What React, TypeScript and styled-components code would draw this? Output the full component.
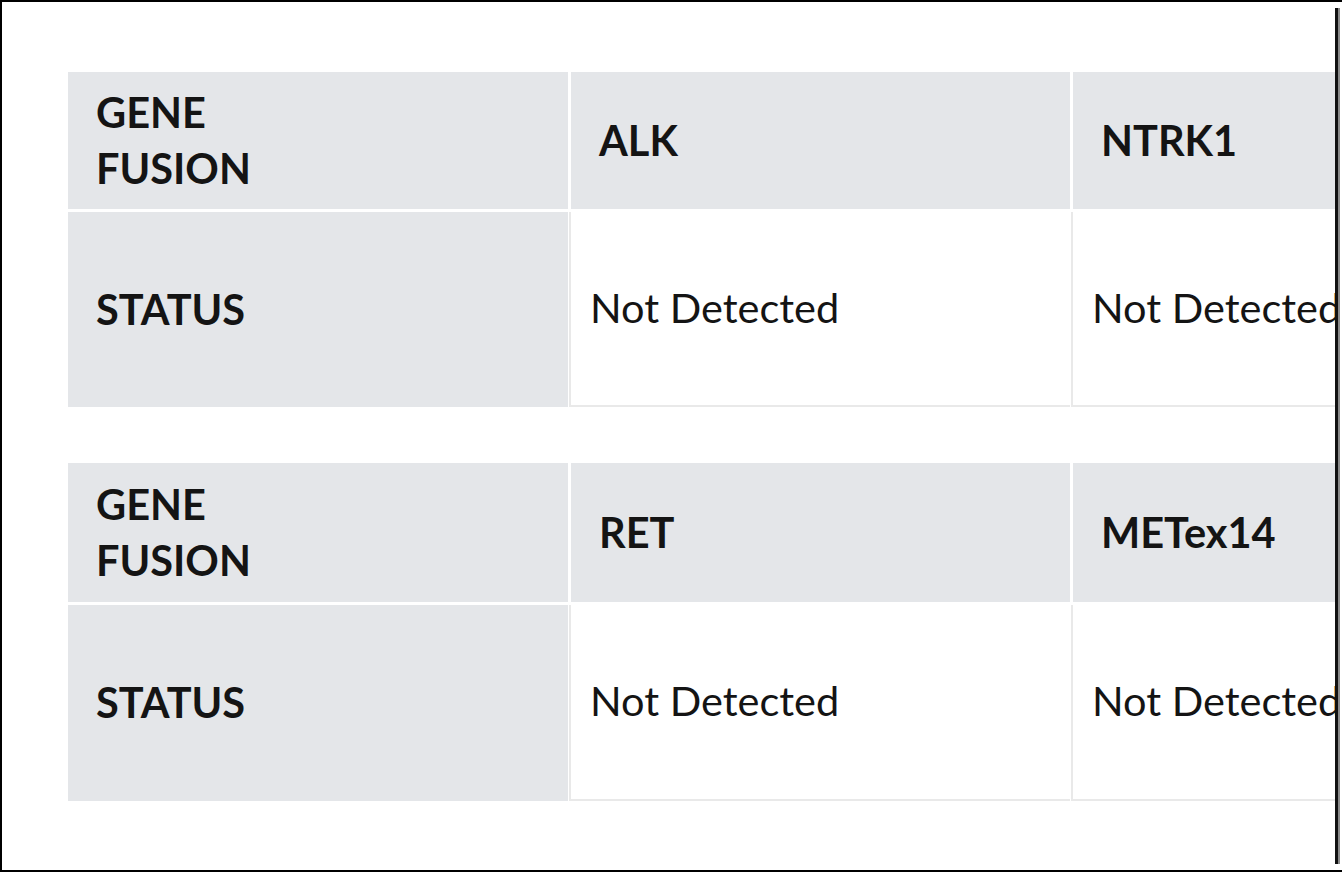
import React from "react";
import styled, { createGlobalStyle } from "styled-components";

const GlobalStyle = createGlobalStyle`
  html, body {
    margin: 0;
    padding: 0;
    background: #ffffff;
  }
  body {
    font-family: Lato, "Open Sans", "Liberation Sans", sans-serif;
    color: #151515;
  }
  * { box-sizing: border-box; }
`;

const Frame = styled.div`
  width: 1342px;
  height: 872px;
  border-top: 2px solid #000;
  border-left: 2px solid #000;
  border-bottom: 2px solid #000;
  display: flex;
  background: #fff;
  overflow: hidden;
`;

const Content = styled.div`
  flex: 1;
  min-width: 0;
  overflow: hidden;
  padding: 70px 0 0 66px;
  display: flex;
  flex-direction: column;
  gap: 56px;
`;

const Rail = styled.div`
  width: 7px;
  margin: 6px 0 6px;
  border-left: 3px solid #111;
  border-right: 2px solid #fff;
  background: #8a8a8a;
  flex-shrink: 0;
`;

const Grid = styled.div<{ $head: number; $body: number }>`
  display: grid;
  grid-template-columns: 500px 499px 500px;
  grid-template-rows: ${(p) => p.$head}px ${(p) => p.$body}px;
  column-gap: 3px;
  row-gap: 3px;
  width: max-content;
`;

const HeadCell = styled.div`
  background: #e4e6e9;
  display: flex;
  align-items: center;
  padding: 0 20px 2px 28px;
  font-weight: 700;
  font-size: 41.5px;
  line-height: 56px;
  color: #141414;
`;

const ValueCell = styled.div`
  background: #fff;
  display: flex;
  align-items: center;
  padding: 0 10px 4px 19px;
  margin-left: -2px;
  border-left: 2px solid #e9e9e9;
  border-bottom: 2px solid #e9e9e9;
  font-weight: 400;
  font-size: 41.5px;
  line-height: 56px;
  color: #141414;
  white-space: nowrap;
`;

type Block = {
  genes: [string, string];
  statuses: [string, string];
  head: number;
  body: number;
};

const blocks: Block[] = [
  { genes: ["ALK", "NTRK1"], statuses: ["Not Detected", "Not Detected"], head: 137, body: 195 },
  { genes: ["RET", "METex14"], statuses: ["Not Detected", "Not Detected"], head: 139, body: 196 },
];

const FusionTable: React.FC<{ block: Block }> = ({ block }) => (
  <Grid $head={block.head} $body={block.body}>
    <HeadCell>
      GENE
      <br />
      FUSION
    </HeadCell>
    {block.genes.map((g) => (
      <HeadCell key={g}>{g}</HeadCell>
    ))}
    <HeadCell>STATUS</HeadCell>
    {block.statuses.map((s, i) => (
      <ValueCell key={i}>{s}</ValueCell>
    ))}
  </Grid>
);

export default function App() {
  return (
    <>
      <GlobalStyle />
      <Frame>
        <Content>
          {blocks.map((b, i) => (
            <FusionTable key={i} block={b} />
          ))}
        </Content>
        <Rail />
      </Frame>
    </>
  );
}
